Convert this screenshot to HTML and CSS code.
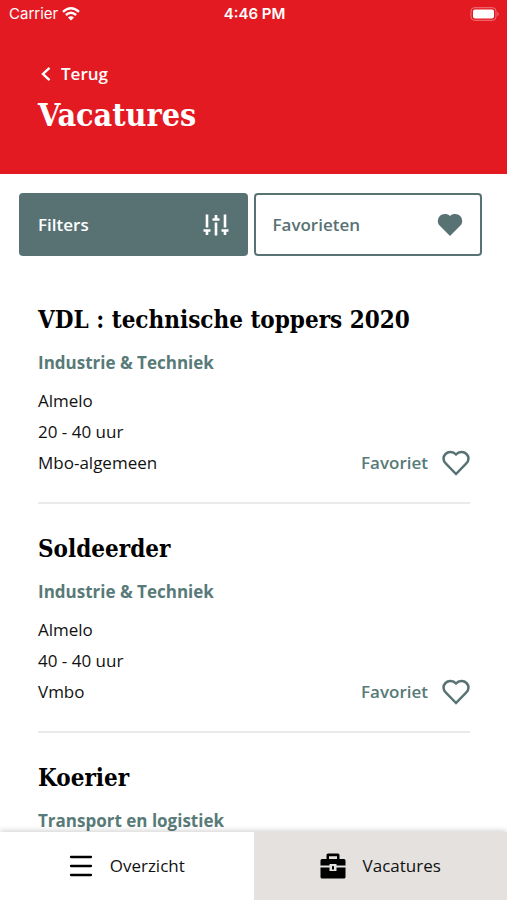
FILE: index.html
```html
<!DOCTYPE html>
<html lang="nl">
<head>
<meta charset="utf-8">
<meta name="viewport" content="width=device-width, initial-scale=1">
<title>Vacatures</title>
<link rel="stylesheet" href="styles.css">
</head>
<body>
<header class="header">
  <div class="status">
    <span class="carrier">Carrier
      <svg width="18" height="14" viewBox="0 0 18 14" fill="none" stroke="#fff" stroke-width="2.4"><path d="M1 4.900Q9-2.300 17 4.900M3.900 8Q9 3.600 14.100 8"/><path d="M9 13.600L6 10.400Q9 8 12 10.400Z" fill="#fff" stroke="none"/></svg>
    </span>
    <span class="time">4:46 PM</span>
    <span class="battery">
      <svg width="30" height="14" viewBox="0 0 30 14"><rect x="1" y=".7" width="25" height="12.600" rx="3.500" fill="none" stroke="#f0777d"/><rect x="3" y="2.600" width="21" height="8.800" rx="1.800" fill="#fff"/><path d="M27.500 4.700Q30 7 27.500 9.300Z" fill="#f0777d"/></svg>
    </span>
  </div>
  <a class="back" href="#">
    <svg width="10" height="16" viewBox="0 0 10 16" fill="none" stroke="#fff" stroke-width="2.400"><path d="M8.500 1.800L2 8l6.500 6.200"/></svg>
    Terug
  </a>
  <h1 class="title">Vacatures</h1>
</header>
<main class="content">
  <div class="actions">
    <button class="action action-filled" type="button">Filters
      <svg width="26" height="22" viewBox="0 0 26 22" fill="none" stroke="#fff" stroke-width="2.600"><path d="M4 .5v13M13 1v4M13 8.500v13M22 .5v13M4 16v5M22 16v5"/><path d="M.5 16.500h7M9.500 5.500h7M18.500 16.500h7"/></svg>
    </button>
    <button class="action" type="button">Favorieten
      <svg width="26" height="24" viewBox="0 0 26 24" fill="#587274"><path d="M13 23L2.800 12.800A6.700 6.700 0 0 1 2.600 3.300C5.300.4 10.200.3 13 3 15.800.3 20.700.4 23.400 3.300A6.700 6.700 0 0 1 23.200 12.800Z"/></svg>
    </button>
  </div>
  <ul class="jobs">
    <li class="job">
      <h2 class="job-title">VDL : technische toppers 2020</h2>
      <p class="category">Industrie &amp; Techniek</p>
      <div class="details">
        <p class="facts">Almelo<br>20 - 40 uur<br>Mbo-algemeen</p>
        <button class="favorite" type="button">Favoriet
          <svg width="28" height="26" viewBox="0 0 28 26" fill="none" stroke="#587274" stroke-width="2.500"><path d="M14 24L3.700 13.400A6.400 6.400 0 0 1 3.500 4C6.200 1.300 11.100 1.300 14 4.500 16.900 1.300 21.800 1.300 24.500 4A6.400 6.400 0 0 1 24.300 13.400Z"/></svg>
        </button>
      </div>
    </li>
    <li class="job">
      <h2 class="job-title">Soldeerder</h2>
      <p class="category">Industrie &amp; Techniek</p>
      <div class="details">
        <p class="facts">Almelo<br>40 - 40 uur<br>Vmbo</p>
        <button class="favorite" type="button">Favoriet
          <svg width="28" height="26" viewBox="0 0 28 26" fill="none" stroke="#587274" stroke-width="2.500"><path d="M14 24L3.700 13.400A6.400 6.400 0 0 1 3.500 4C6.200 1.300 11.100 1.300 14 4.500 16.900 1.300 21.800 1.300 24.500 4A6.400 6.400 0 0 1 24.300 13.400Z"/></svg>
        </button>
      </div>
    </li>
    <li class="job">
      <h2 class="job-title">Koerier</h2>
      <p class="category">Transport en logistiek</p>
    </li>
  </ul>
</main>
<nav class="tabs">
  <a class="tab" href="#">
    <svg width="24" height="22" viewBox="0 0 24 22" stroke="#000" stroke-width="2.300" stroke-linecap="round"><path d="M2 2h20M2 11h20M2 20h20"/></svg>
    Overzicht
  </a>
  <a class="tab tab-active" href="#" aria-current="page">
    <svg width="26" height="26" viewBox="0 0 26 26"><path fill-rule="evenodd" d="M6.500 6V2Q6.500.5 8 .5h10Q19.500.5 19.500 2v4H24q1.500 0 1.500 1.500V12.500H16.500v-1.500h-7v1.500H.5V7.500Q.5 6 2 6ZM9 6h8V3.200H9Z"/><path d="M.5 14.500H9.500V18h7v-3.500h9V24q0 1.500-1.500 1.500H2Q.5 25.500.5 24Z"/><rect x="12" y="13" width="2" height="3.500" rx=".6"/></svg>
    Vacatures
  </a>
</nav>
</body>
</html>
```
FILE: styles.css
```css
* { box-sizing: border-box; }

body {
  margin: 0;
  height: 100vh;
  display: flex;
  flex-direction: column;
  background: #fff;
  color: #111;
  font: 17px/24px "Open Sans", sans-serif;
}

h1, h2, p, ul { margin: 0; padding: 0; }
a { color: inherit; text-decoration: none; }
svg { display: block; flex: none; }
button { font: inherit; cursor: pointer; }

.header {
  flex: none;
  height: 174px;
  background: #e41a23;
  color: #fff;
}

.status {
  display: grid;
  grid-template-columns: 1fr auto 1fr;
  align-items: center;
  height: 28px;
  padding: 0 7px 0 9px;
  font: 15px/20px Inter, sans-serif;
}
.carrier { display: flex; align-items: center; gap: 4px; }
.time { font-weight: 600; }
.battery { justify-self: end; }

.back {
  display: inline-flex;
  align-items: center;
  gap: 10px;
  margin: 34px 0 0 41px;
  font-weight: 600;
}

.title {
  margin: 4px 38px 0;
  font: bold 32px/46px "DejaVu Serif Condensed", "DejaVu Serif", serif;
}

.content {
  flex: 1;
  min-height: 0;
  overflow-y: auto;
  scrollbar-width: none;
}

.actions {
  display: flex;
  gap: 6px;
  padding: 19px 25px 19px 19px;
}
.action {
  flex: 1;
  display: flex;
  align-items: center;
  justify-content: space-between;
  height: 63px;
  padding: 0 17px;
  border: 2px solid #587274;
  border-radius: 4px;
  background: #fff;
  color: #587274;
  font-weight: 600;
}
.action-filled { background: #587274; color: #fff; }

.jobs { list-style: none; padding: 0 37px 0 38px; }
.job {
  padding: 25px 0 24px;
  border-bottom: 2px solid #e9ebeb;
}
.job-title {
  font: bold 24px/40px "DejaVu Serif Condensed", "DejaVu Serif", serif;
  color: #000;
}
.category {
  margin: 10px 0 9px;
  line-height: 26px;
  font-weight: 700;
  color: #587a78;
}
.details {
  display: flex;
  justify-content: space-between;
  align-items: flex-end;
}
.facts { line-height: 31px; }
.favorite {
  display: flex;
  align-items: center;
  gap: 14px;
  padding: 0;
  height: 31px;
  border: 0;
  background: none;
  color: #587a78;
  font-weight: 600;
}

.tabs {
  flex: none;
  display: flex;
  height: 68px;
  background: #fff;
  box-shadow: 0 -1px 6px rgba(0, 0, 0, 0.2);
  z-index: 1;
}
.tab {
  flex: 1;
  display: flex;
  align-items: center;
  justify-content: center;
  gap: 17px;
}
.tab-active { background: #e4e1df; }
```
